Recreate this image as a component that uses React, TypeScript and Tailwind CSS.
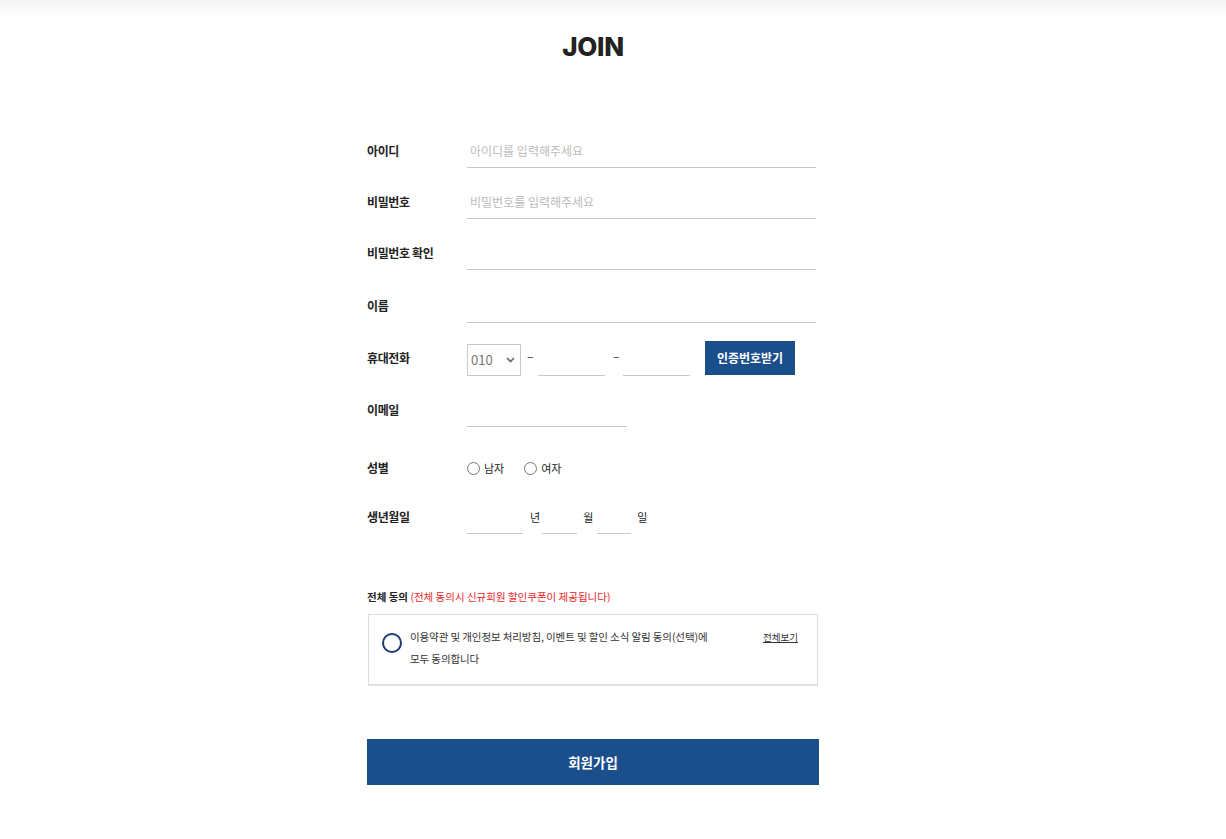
import React from 'react';

const KR = "font-['Noto_Sans_CJK_KR','Noto_Sans',sans-serif]";

const Label: React.FC<{ children: React.ReactNode }> = ({ children }) => (
  <span className="w-[100px] shrink-0 text-[12px] font-bold text-[#222] tracking-[-0.03em]">{children}</span>
);

const Line: React.FC<{ className?: string; placeholder?: string; type?: string }> = ({ className = '', placeholder, type = 'text' }) => (
  <input
    type={type}
    placeholder={placeholder}
    className={`h-[34px] border-0 border-b border-[#c8c8c8] bg-transparent px-[3px] text-[12px] text-[#333] outline-none placeholder:text-[#bbb] ${className}`}
  />
);

export default function App() {
  return (
    <div className={`min-h-[839px] w-full bg-white ${KR}`}>
      {/* top header shadow */}
      <div className="h-[18px] bg-gradient-to-b from-[#f3f3f3] to-white" />

      <div className="flex justify-center pr-[40px]">
        <div className="w-[452px]">
          <h1 className="mt-[16px] text-center font-['Inter',sans-serif] text-[26px] font-extrabold leading-[26px] tracking-[-0.01em] text-[#222]">
            JOIN
          </h1>

          <div className="mt-[74px]">
            <div className="flex h-[34px] items-center">
              <Label>아이디</Label>
              <Line className="w-[349px]" placeholder="아이디를 입력해주세요" />
            </div>
            <div className="mt-[17px] flex h-[34px] items-center">
              <Label>비밀번호</Label>
              <Line type="password" className="w-[349px]" placeholder="비밀번호를 입력해주세요" />
            </div>
            <div className="mt-[17px] flex h-[34px] items-center">
              <Label>비밀번호 확인</Label>
              <Line type="password" className="w-[349px]" />
            </div>
            <div className="mt-[19px] flex h-[34px] items-center">
              <Label>이름</Label>
              <Line className="w-[349px]" />
            </div>

            {/* phone */}
            <div className="mt-[18px] flex h-[34px] items-center">
              <Label>휴대전화</Label>
              <div className="relative mt-[3px] h-[32px] w-[54px] border border-[#c8c8c8]">
                <select className="h-full w-full appearance-none bg-transparent pl-[3px] text-[13px] text-[#777] outline-none">
                  <option>010</option>
                  <option>011</option>
                  <option>016</option>
                  <option>017</option>
                </select>
                <svg className="pointer-events-none absolute right-[5px] top-[12px]" width="9" height="6" viewBox="0 0 9 6" fill="none">
                  <path d="M1 1l3.5 3.5L8 1" stroke="#666" strokeWidth="1.6" />
                </svg>
              </div>
              <span className="w-[17px] pb-[4px] pl-[6px] text-[12px] text-[#333]">–</span>
              <Line className="mt-[2px] w-[67px]" />
              <span className="w-[18px] pb-[4px] pl-[8px] text-[12px] text-[#333]">–</span>
              <Line className="mt-[2px] w-[67px]" />
              <button className="ml-[15px] h-[34px] w-[90px] bg-[#1b4f8c] text-[12px] font-bold text-white">
                인증번호받기
              </button>
            </div>

            {/* email */}
            <div className="mt-[18px] flex h-[34px] items-center">
              <Label>이메일</Label>
              <Line type="email" className="w-[160px]" />
            </div>

            {/* gender */}
            <div className="mt-[24px] flex h-[34px] items-center">
              <Label>성별</Label>
              <label className="flex items-center text-[11px] text-[#222]">
                <input type="radio" name="gender" className="m-0 mr-[4px] h-[13px] w-[13px]" />
                남자
              </label>
              <label className="ml-[20px] flex items-center text-[11px] text-[#222]">
                <input type="radio" name="gender" className="m-0 mr-[4px] h-[13px] w-[13px]" />
                여자
              </label>
            </div>

            {/* birth */}
            <div className="mt-[15px] flex h-[34px] items-center">
              <Label>생년월일</Label>
              <Line className="w-[56px]" />
              <span className="ml-[7px] mr-[2px] text-[11px] text-[#222]">년</span>
              <Line className="w-[35px]" />
              <span className="ml-[6px] mr-[4px] text-[11px] text-[#222]">월</span>
              <Line className="w-[34px]" />
              <span className="ml-[6px] text-[11px] text-[#222]">일</span>
            </div>
          </div>

          {/* agreement */}
          <div className="mt-[55px]">
            <p className="text-[10.5px]">
              <span className="font-bold text-[#222]">전체 동의</span>{' '}
              <span className="text-[#ee1c25]">(전체 동의시 신규회원 할인쿠폰이 제공됩니다)</span>
            </p>
            <div className="ml-px mt-[9px] flex h-[71px] w-[450px] items-start border border-[#ddd] pl-[13px] pr-[19px] pt-[11px] shadow-[0_1px_0_#e4e4e4]">
              <span className="mt-[7px] h-[20px] w-[20px] shrink-0 rounded-full border-2 border-[#1f3a6e]" />
              <p className="ml-[8px] w-[330px] text-[10.5px] leading-[22px] tracking-[-0.01em] text-[#333]">
                이용약관 및 개인정보 처리방침, 이벤트 및 할인 소식 알림 동의(선택)에
                <br />
                모두 동의합니다
              </p>
              <a href="#" className="ml-auto text-[9.5px] leading-[22px] text-[#333] underline">
                전체보기
              </a>
            </div>
          </div>

          <button className="mt-[54px] h-[46px] w-[452px] bg-[#1b4f8c] text-[13.5px] font-bold text-white">
            회원가입
          </button>
        </div>
      </div>
    </div>
  );
}
